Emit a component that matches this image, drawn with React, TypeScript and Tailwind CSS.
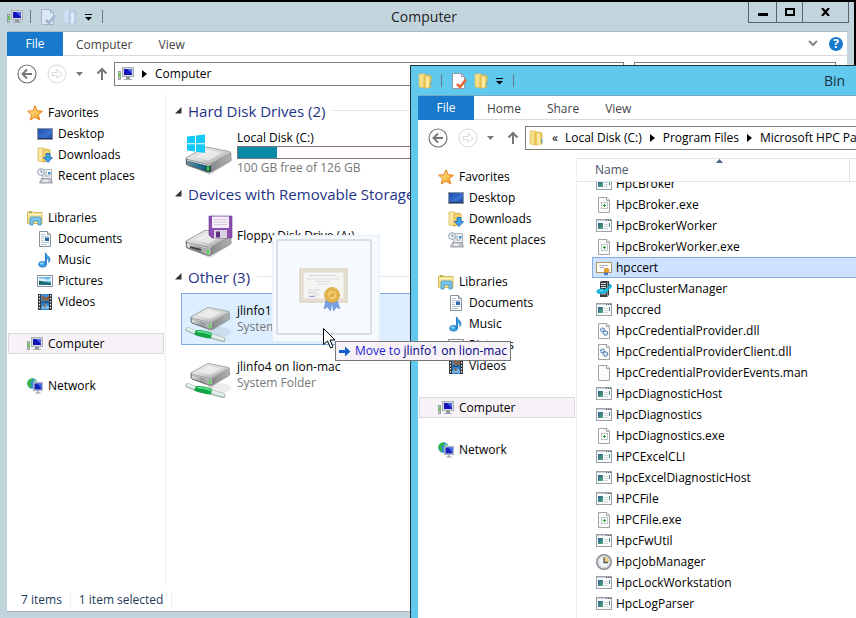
import React from "react";

type IconProps = { size?: number };

/* ---------- small icons ---------- */

const ComputerIcon = () => (
  <svg width="16" height="16" viewBox="0 0 16 16">
    <rect x="0.5" y="5.5" width="2" height="8" fill="#c9ccd0" stroke="#8b8f94" strokeWidth=".8" />
    <rect x="1" y="7" width="1.500" height="4" fill="#5fd23c" />
    <rect x="4.5" y="1.500" width="11" height="9" fill="#d6d9de" stroke="#a9adb4" />
    <rect x="6" y="3" width="8" height="6" fill="#1214b8" />
    <path d="M9 3h5v5z" fill="#4a63e8" />
    <rect x="8" y="11" width="4" height="2" fill="#8e9298" />
    <rect x="6" y="13" width="8" height="1" fill="#a9adb2" />
  </svg>
);

const FolderIcon = ({ size = 16 }: IconProps) => (
  <svg width={size} height={size} viewBox="0 0 16 16">
    <path d="M1 1h6l1 2v12l-7-1z" fill="#f7e08b" stroke="#e0bf52" strokeWidth=".7" />
    <path d="M6 3l4-1 3 1v11l-7 1z" fill="#f0cb58" stroke="#d5ab3a" strokeWidth=".7" />
    <path d="M8 3l3 1v10l-3 1.500z" fill="#fbe9a6" />
    <path d="M12 9h1.500v4H12z" fill="#5db4d8" />
  </svg>
);

const PaleFolderIcon = () => (
  <svg width="16" height="16" viewBox="0 0 16 16">
    <path d="M1 1h6l1 2v12l-7-1z" fill="#d3e0f2" stroke="#b8c9e2" strokeWidth=".7" />
    <path d="M6 3l4-1 3 1v11l-7 1z" fill="#bfd0e8" stroke="#a9bdd9" strokeWidth=".7" />
    <path d="M8 3l3 1v10l-3 1.500z" fill="#dfe9f7" />
  </svg>
);

const PropertiesIcon = ({ pale }: { pale?: boolean }) => (
  <svg width="16" height="16" viewBox="0 0 16 16">
    <path
      d="M.5.5h9l3 3v12h-12z"
      fill={pale ? "#dce7f5" : "#fdfdff"}
      stroke={pale ? "#9fb3cd" : "#8f99ab"}
    />
    <path d="M9.500.5v3h3" fill="none" stroke={pale ? "#9fb3cd" : "#8f99ab"} />
    <path d="M5 11l3 3 6-7.500" fill="none" stroke={pale ? "#a3b5d2" : "#e8683c"} strokeWidth="2.600" />
  </svg>
);

const StarIcon = () => (
  <svg width="16" height="16" viewBox="0 0 16 16">
    <defs>
      <linearGradient id="star" x1="0" y1="0" x2="1" y2="1">
        <stop offset="0" stopColor="#fff3a0" />
        <stop offset="1" stopColor="#f59a1c" />
      </linearGradient>
    </defs>
    <path
      d="M8 .8l2.100 4.900 5.300.5-4 3.500 1.300 5.200L8 12.200l-4.700 2.700 1.300-5.200-4-3.500 5.300-.5z"
      fill="url(#star)"
      stroke="#e87f18"
    />
  </svg>
);

const DesktopIcon = () => (
  <svg width="16" height="16" viewBox="0 0 16 16">
    <defs>
      <linearGradient id="desk" x1="0" y1="0" x2="1" y2="1">
        <stop offset="0" stopColor="#1d48a8" />
        <stop offset=".6" stopColor="#3b72cf" />
        <stop offset="1" stopColor="#1c3f96" />
      </linearGradient>
    </defs>
    <rect x=".5" y="2.500" width="15" height="11" fill="url(#desk)" stroke="#8d98a8" />
    <rect x="1" y="12" width="14" height="1" fill="#243354" />
  </svg>
);

const DownloadsIcon = () => (
  <svg width="16" height="16" viewBox="0 0 16 16">
    <path d="M1 1h6l1 2v12l-7-1z" fill="#f9e6a0" stroke="#dcb953" strokeWidth=".8" />
    <path d="M6 3l4-1 3 1v10l-7 2z" fill="#f1d270" stroke="#d5ab3a" strokeWidth=".8" />
    <path d="M9 6.500h4v4h2.500L11 15.500 6.500 10.500H9z" fill="#3d9fe8" stroke="#1c68b8" strokeWidth=".8" />
  </svg>
);

const RecentIcon = () => (
  <svg width="16" height="16" viewBox="0 0 16 16">
    <path d="M5.500 1.500h9v10h-9z" fill="#f4f6f8" stroke="#aab0b8" />
    <path d="M4.500 10.500h9.500l1.500 4.500h-13z" fill="#c3c7cc" stroke="#8d939b" strokeWidth=".8" />
    <path d="M8 4h2M7 6h3M7 8h6" stroke="#9aa5b5" />
    <rect x="11" y="4" width="2.500" height="2.500" fill="#3d8bd0" />
    <rect x="6" y="12" width="5" height="1.500" fill="#f9f9f9" />
    <circle cx="4" cy="4" r="3.400" fill="#eef3f8" stroke="#8f9aa8" strokeWidth=".9" />
    <path d="M4 2v2.200h1.600" fill="none" stroke="#4d6a90" strokeWidth=".8" />
  </svg>
);

const LibrariesIcon = () => (
  <svg width="16" height="16" viewBox="0 0 16 16">
    <path d="M.5 2.500l1-1h4l1 1h8.500v11H.5z" fill="#f6df8d" stroke="#d3b04c" strokeWidth=".9" />
    <path d="M1 4.500h14" stroke="#fff6cf" />
    <rect x="2" y="2" width="3" height="1" fill="#7aba56" />
    <path d="M3 15V8.500q0-1.500 1.500-1.500h8Q14 7 14 8.500V15h-3v-4H6v4z" fill="#7cc5ea" stroke="#3e94c8" strokeWidth=".8" />
  </svg>
);

const DocumentsIcon = () => (
  <svg width="16" height="16" viewBox="0 0 16 16">
    <path d="M2.500.5h8l3 3v12h-11z" fill="#fdfdfd" stroke="#8a9099" />
    <path d="M10.500.5v3h3" fill="#dfe3e8" stroke="#8a9099" />
    <path d="M4 3.500h4M4 5.500h8M4 7.500h3M4 9.500h3M4 11.500h8M4 13.500h6" stroke="#a9bdd3" strokeWidth=".9" />
    <rect x="8" y="6.500" width="4" height="3.500" fill="#2a64ad" />
  </svg>
);

const MusicIcon = () => (
  <svg width="16" height="16" viewBox="0 0 16 16">
    <path d="M8 .5c.8 3 4.500 3.200 5 6.500.2 1.600-.5 2.700-1.300 3.500.6-2.600-.8-3.600-2.200-4v6" fill="#3ba0e6" stroke="#1d6fb8" strokeWidth=".6" />
    <ellipse cx="5.600" cy="12.300" rx="4" ry="2.900" fill="#3ba0e6" stroke="#1d6fb8" strokeWidth=".7" />
    <path d="M8.700 1v11.500" stroke="#2682cc" strokeWidth="1.500" />
    <ellipse cx="4.800" cy="11.600" rx="1.700" ry="1" fill="#9fd7fa" />
  </svg>
);

const PicturesIcon = () => (
  <svg width="16" height="16" viewBox="0 0 16 16">
    <rect x=".5" y="2.500" width="15" height="11" fill="#fff" stroke="#8d939b" />
    <rect x="2" y="4" width="12" height="8" fill="#6cb8e6" />
    <path d="M2 6q3-1.500 6 0t6-1v3H2z" fill="#d8eefa" />
    <path d="M2 8l3 .5L14 10v2H2z" fill="#15707a" />
    <path d="M2 7.500l6 2.500H2z" fill="#1e5f4a" />
  </svg>
);

const VideosIcon = () => (
  <svg width="16" height="16" viewBox="0 0 16 16">
    <rect x="1" y="0" width="14" height="16" fill="#2e3338" />
    <rect x="4" y="0" width="8" height="7.500" fill="#3a8fd6" />
    <rect x="4" y="8.500" width="8" height="7.500" fill="#2f80c8" />
    <path d="M5 1l4 3 3-3v5L8 7 5 5z" fill="#92603f" />
    <path d="M4 14l4-4 4 2v3H4z" fill="#77b6e4" />
    <path d="M6 10l3 1-1 3z" fill="#8b5a3c" />
    <path d="M2.500 1v15M13.500 1v15" stroke="#e8ecef" strokeWidth="1.200" strokeDasharray="1.500 1.500" />
  </svg>
);

const NetworkIcon = () => (
  <svg width="16" height="16" viewBox="0 0 16 16">
    <circle cx="5.500" cy="5.500" r="5.200" fill="#2f8fe4" />
    <path d="M.5 4Q3-.5 7 .6L5.500 3 3 4.500l1.500 2L4 10Q.5 8.500.4 5z" fill="#32b83c" />
    <path d="M7.500 1.500L10.500 4H7z" fill="#9af07c" />
    <rect x="6.500" y="4.500" width="9" height="8" fill="#d2d6dd" stroke="#aab1bf" />
    <rect x="7.500" y="5.500" width="7" height="6" fill="#1420b8" />
    <path d="M10 5.500h4.500v5z" fill="#4768e8" />
    <path d="M11 13v1.500M8.500 15h5" stroke="#8b93a3" strokeWidth="1.200" />
  </svg>
);

/* ---------- file icons ---------- */

const AppFileIcon = () => (
  <svg width="16" height="16" viewBox="0 0 16 16">
    <defs>
      <linearGradient id="app" x1="0" y1="0" x2="1" y2="1">
        <stop offset="0" stopColor="#2f5f96" />
        <stop offset="1" stopColor="#4fae74" />
      </linearGradient>
    </defs>
    <rect x=".5" y="1.500" width="15" height="12" fill="#fbfcfd" stroke="#9aa1a8" />
    <rect x="1" y="2" width="14" height="1" fill="#c8ced5" />
    <path d="M10 2.500h1M12 2.500h1M14 2.500h1" stroke="#4c5560" />
    <rect x="2" y="5" width="5" height="6" fill="url(#app)" />
    <path d="M8 6.500h4M8 8.500h4M8 10.500h4" stroke="#ccd2d8" strokeWidth=".9" />
    <rect x="13" y="5" width="1" height="4" fill="#3b8c80" />
  </svg>
);

const Sheet = ({ children }: { children?: React.ReactNode }) => (
  <svg width="16" height="16" viewBox="0 0 16 16">
    <path d="M2.500.5h8.500l2.500 2.500v12.500h-11z" fill="#fcfcfc" stroke="#a3a3a3" />
    <path d="M10.500.5v3h3" fill="#ececec" stroke="#a3a3a3" />
    {children}
  </svg>
);

const ConfigFileIcon = () => (
  <Sheet>
    <rect x="5.500" y="5.500" width="6" height="6" fill="#fff" stroke="#b4b9be" strokeWidth=".8" />
    <path d="M8.500 7v3M7 8.500h3" stroke="#22a13c" strokeWidth="1.200" />
  </Sheet>
);

const DllIcon = () => (
  <Sheet>
    <circle cx="6.500" cy="7" r="1.900" fill="#d6e6f5" stroke="#3d6f9e" strokeWidth="1.200" strokeDasharray="1.200 .6" />
    <circle cx="9.500" cy="10" r="2.200" fill="#d6e6f5" stroke="#3d6f9e" strokeWidth="1.300" strokeDasharray="1.200 .6" />
  </Sheet>
);

const BlankIcon = () => <Sheet />;

const CertIcon = () => (
  <svg width="16" height="16" viewBox="0 0 16 16">
    <rect x=".5" y="2.500" width="15" height="10" fill="#fffdf8" stroke="#b39565" />
    <path d="M3 5.500h9M4 7.500h4" stroke="#9fa6c6" strokeWidth=".9" />
    <path d="M8.500 11.500L8 15.500l2-1 2 1-.5-4z" fill="#2f63d6" />
    <circle cx="10.500" cy="10.500" r="2.300" fill="#e8a51a" stroke="#b87a10" strokeWidth=".6" />
  </svg>
);

const ClusterIcon = () => (
  <svg width="16" height="16" viewBox="0 0 16 16">
    <path d="M4 1l2-1h7v14l-2 2H4z" fill="#34393d" />
    <path d="M5 2.500h5M5 4.500h5M5 6.500h5M5 13h5" stroke="#d9dde0" />
    <path d="M11.500 1v14" stroke="#8b9298" />
    <path d="M1 12Q-1 9 3 8q3-1 5 .5L12 6q2-1.500.5-3.500 4 .5 3.300 3.500Q15 8 12 9q-1 3.500-5 3.500-4 1-6-.5z" fill="#1cb6de" />
    <path d="M4 9.500q2-.5 3.500.5" stroke="#8be2f4" fill="none" />
  </svg>
);

const ClockIcon = () => (
  <svg width="16" height="16" viewBox="0 0 16 16">
    <circle cx="8" cy="8" r="7.200" fill="#f2f4f7" stroke="#8b8f95" strokeWidth="1.600" />
    <path d="M8 8V2.500A5.500 5.500 0 0 1 13.500 8z" fill="#f4c873" />
    <circle cx="8" cy="8" r="5.500" fill="none" stroke="#c7ccd2" strokeWidth=".8" />
    <path d="M8 3.500V8.500h4" fill="none" stroke="#4c5764" strokeWidth="1.300" />
  </svg>
);

/* ---------- drive icons ---------- */

const DriveGradients = () => (
  <defs>
    <linearGradient id="lid" x1="0" y1="0" x2="1" y2="1">
      <stop offset="0" stopColor="#f4f4f4" />
      <stop offset=".55" stopColor="#d4d5d5" />
      <stop offset="1" stopColor="#8f9192" />
    </linearGradient>
    <linearGradient id="front">
      <stop offset="0" stopColor="#e6e7e7" />
      <stop offset=".5" stopColor="#9a9c9d" />
      <stop offset="1" stopColor="#c4c6c7" />
    </linearGradient>
    <linearGradient id="side" x1="0" y1="0" x2="1" y2="0">
      <stop offset="0" stopColor="#55585a" />
      <stop offset="1" stopColor="#b0b2b3" />
    </linearGradient>
    <linearGradient id="sys">
      <stop offset="0" stopColor="#6f8c96" />
      <stop offset=".55" stopColor="#1b6d94" />
      <stop offset="1" stopColor="#1d4a48" />
    </linearGradient>
  </defs>
);

const DriveBody = ({ front = "url(#front)" }: { front?: string }) => (
  <g>
    <DriveGradients />
    <path d="M6 38l19 8 22-14v-3z" fill="#000" opacity=".14" />
    <path d="M1 29L19 19q2-1 4-.6l21 4.100q2 .6 2 2v6q0 1-1.500 2L27 42.500q-2.500 1.400-5 .6L3 36.500q-2-.8-2-2.500z" fill="url(#side)" stroke="#6d7072" strokeWidth=".5" />
    <path d="M1 29L19 19q2-1 4-.6l21 4.100q2.500.8 0 2.200L27 34.500q-2.500 1.400-5 .6L3 30.500q-2-.6-2-1.500z" fill="url(#lid)" stroke="#8d9092" strokeWidth=".5" />
    <path d="M10 28l12.500-7 14 3L24 31.500z" fill="#fff" opacity=".45" />
    <path d="M1.500 31l20 5.300q2.500.6 4.500-.3v6.500q-2 .9-4 .3L3 36q-1.500-.6-1.500-2z" fill={front} stroke="#5f6264" strokeWidth=".7" />
    <path d="M2 31l19.500 5q2.500.6 4.500-.3" fill="none" stroke="#f8f8f8" strokeWidth=".8" />
    <rect x="22" y="37.500" width="2" height="4" fill="#37e02c" />
  </g>
);

const SystemDriveIcon = () => (
  <svg width="48" height="48" viewBox="0 0 48 48">
    <DriveBody front="url(#sys)" />
    <path d="M2 7.500l8-.8v7.500H2zM11 6.500l9-1V14.200h-9zM2 15.200h8v7.300L2 21.500zM11 15.200h9V24l-9-1.300z" fill="#14c8fa" />
  </svg>
);

const FloppyDriveIcon = () => (
  <svg width="48" height="48" viewBox="0 0 48 48">
    <DriveBody />
    <path d="M5 34l11 3v2L5 36z" fill="#3c3f40" />
    <path d="M24 4h23v22H27l-3-3z" fill="#8a4fb0" stroke="#6f3796" strokeWidth=".6" />
    <rect x="27" y="4.500" width="17" height="11.500" fill="#f3eef7" />
    <path d="M29 7.500h13M29 10h13M29 12.500h13" stroke="#cfc3da" strokeWidth=".8" />
    <rect x="29" y="18" width="13" height="8" fill="#d9d3e0" />
    <rect x="31" y="19.500" width="4" height="6" fill="#613184" />
  </svg>
);

const NetworkDriveIcon = () => (
  <svg width="48" height="48" viewBox="0 0 48 48">
    <ellipse cx="34" cy="37" rx="12" ry="5" fill="#000" opacity=".07" />
    <g transform="translate(5 -3) scale(.86)">
      <DriveBody />
    </g>
    <path d="M26 37v-2" stroke="#d0d5d4" strokeWidth="4" />
    <path d="M3 34.500l9 3.500M26 41l12 3.500" stroke="#a3b8ae" strokeWidth="5" strokeLinecap="round" />
    <path d="M3 34l9 3.500M26 40.500l12 3.500" stroke="#e3efea" strokeWidth="3" strokeLinecap="round" />
    <path d="M11 35q7-.5 16 3l-1 5.500q-8-.3-17-4z" fill="#12a447" />
    <path d="M12 36.500q7 0 14 2.700" stroke="#5fe890" strokeWidth="1.500" fill="none" />
  </svg>
);

const BigCertificate = () => (
  <svg width="50" height="44" viewBox="0 0 50 44" className="opacity-85">
    <rect x="1" y="1" width="47" height="33" fill="#e8e0d0" stroke="#cbc0a8" />
    <rect x="4" y="4" width="41" height="27" fill="#f6f5f0" stroke="#d3cbb8" strokeWidth=".7" />
    <path d="M11 7.500h26" stroke="#b5c4de" strokeWidth="1.200" strokeDasharray="2 .5" />
    <path d="M8 11h32M17 13.500h15M19 16h11" stroke="#ccd3df" strokeDasharray="3 .6" />
    <path d="M9 22h13M9 24.500h9M10 27h10" stroke="#c0c6d0" strokeDasharray="2 .6" />
    <path d="M10 28.500h6" stroke="#7f9dcd" />
    <path d="M27 32l-2 9 3.500-2 3 4 1.500-9zM38 32l3 9-3.500-2-3 4-1.500-9z" fill="#6191df" stroke="#3f6fc4" strokeWidth=".5" />
    <circle cx="33" cy="27" r="7.500" fill="#e5ab2b" stroke="#c78d1d" strokeDasharray="2 1" />
    <circle cx="33" cy="27" r="5" fill="#f2c654" stroke="#c9901f" strokeWidth=".7" />
    <path d="M29.500 29q2-5 6.500-4-1 5-6.500 4z" fill="#dba02a" />
  </svg>
);

/* ---------- shared window parts ---------- */

const Divider = ({ className = "" }: { className?: string }) => (
  <span className={`h-[13px] w-px bg-[#6b7880] ${className}`} />
);

function QuickAccess({ icon, pale }: { icon: React.ReactNode; pale?: boolean }) {
  return (
    <div className="flex items-center">
      <span className="w-4">{icon}</span>
      <Divider className="ml-[7px]" />
      <button aria-label="Properties" className="ml-[10px]">
        <PropertiesIcon pale={pale} />
      </button>
      <button aria-label="New folder" className="ml-[6px]">
        {pale ? <PaleFolderIcon /> : <FolderIcon />}
      </button>
      <button aria-label="Customize toolbar" className="ml-[5px]">
        <svg width="9" height="8" viewBox="0 0 9 8">
          <path d="M1 1.500h7" stroke="#000" />
          <path d="M1 4h7L4.500 7.500z" />
        </svg>
      </button>
      <Divider className="ml-[9px]" />
    </div>
  );
}

function RibbonTabs({ tabs, children }: { tabs: string[]; children?: React.ReactNode }) {
  return (
    <div className="flex h-6 items-stretch border-b border-[#d9dadb]">
      <button className="-mb-px w-14 bg-[#1979ca] text-white">File</button>
      {tabs.map((tab) => (
        <button key={tab} className="px-[13px] pt-[2px] text-[#444]">
          {tab}
        </button>
      ))}
      {children}
    </div>
  );
}

const Chevron = () => (
  <svg width="5" height="8" viewBox="0 0 5 8" className="shrink-0">
    <path d="M0 0l5 4-5 4z" />
  </svg>
);

function NavigationBar({ children, search }: { children: React.ReactNode; search?: boolean }) {
  return (
    <div className="flex h-[38px] items-start pt-[6px] pr-[11px] pl-[10px]">
      <div className="flex h-6 shrink-0 items-center">
        <button aria-label="Back">
          <svg width="20" height="20" viewBox="0 0 20 20" fill="none" stroke="#777">
            <circle cx="10" cy="10" r="9" strokeWidth="1.200" />
            <path d="M15 10H6M10 5.500L5.500 10l4.500 4.500" strokeWidth="2" />
          </svg>
        </button>
        <button aria-label="Forward" className="ml-[10px]">
          <svg width="20" height="20" viewBox="0 0 20 20" fill="none" stroke="#d9d9d9">
            <circle cx="10" cy="10" r="9" />
            <path d="M5 8.500h5V5.500l5 4.500-5 4.500v-3H5z" />
          </svg>
        </button>
        <button aria-label="Recent locations" className="ml-[8px]">
          <svg width="9" height="6" viewBox="0 0 9 6">
            <path d="M1 1h7L4.500 5z" fill="#777" />
          </svg>
        </button>
        <button aria-label="Up" className="ml-[12px]">
          <svg width="12" height="14" viewBox="0 0 12 14" fill="none" stroke="#777" strokeWidth="2">
            <path d="M6 13V2M1.500 6.500L6 2l4.500 4.500" />
          </svg>
        </button>
      </div>
      <div className="ml-[6px] flex h-6 flex-1 items-center overflow-hidden border border-[#7d7d7d] pl-[3px] whitespace-nowrap">
        {children}
      </div>
      {search && (
        <input aria-label="Search Computer" className="ml-[10px] h-6 w-[202px] border border-[#7d7d7d] bg-white px-2" />
      )}
    </div>
  );
}

type NavEntry = { label: string; icon: () => React.ReactElement; nested?: boolean };

const navGroups: NavEntry[][] = [
  [
    { label: "Favorites", icon: StarIcon },
    { label: "Desktop", icon: DesktopIcon, nested: true },
    { label: "Downloads", icon: DownloadsIcon, nested: true },
    { label: "Recent places", icon: RecentIcon, nested: true },
  ],
  [
    { label: "Libraries", icon: LibrariesIcon },
    { label: "Documents", icon: DocumentsIcon, nested: true },
    { label: "Music", icon: MusicIcon, nested: true },
    { label: "Pictures", icon: PicturesIcon, nested: true },
    { label: "Videos", icon: VideosIcon, nested: true },
  ],
  [{ label: "Computer", icon: ComputerIcon }],
  [{ label: "Network", icon: NetworkIcon }],
];

function NavigationPane() {
  return (
    <nav className="flex w-[159px] shrink-0 flex-col gap-[21px] border-r border-[#f0f0f0] pt-2 pr-px pl-px">
      {navGroups.map((group) => (
        <ul key={group[0].label}>
          {group.map(({ label, icon: Icon, nested }) => (
            <li key={label}>
              <button
                className={`flex h-[21px] w-full items-center gap-[5px] border ${nested ? "pl-7" : "pl-[18px]"} ${
                  label === "Computer" ? "border-[#dadada] bg-[#f7f2f7]" : "border-transparent"
                }`}
              >
                <Icon />
                {label}
              </button>
            </li>
          ))}
        </ul>
      ))}
    </nav>
  );
}

/* ---------- "Computer" window ---------- */

function Group({ title, children }: { title: string; children: React.ReactNode }) {
  return (
    <section>
      <h2 className="flex h-[31px] items-center pb-[2px] text-[15px] whitespace-nowrap text-[#1e3287]">
        <svg width="7" height="7" viewBox="0 0 7 7" className="mr-[6px] shrink-0">
          <path d="M6.500 0v6.500H0z" fill="#333" />
        </svg>
        {title}
        <span className="ml-[7px] h-px flex-1 bg-[#dfeaf3]" />
      </h2>
      <ul className="flex flex-col gap-1 pl-[6px]">{children}</ul>
    </section>
  );
}

function Drive({
  icon,
  name,
  detail,
  used,
  selected,
}: {
  icon: React.ReactNode;
  name: string;
  detail?: string;
  used?: number;
  selected?: boolean;
}) {
  return (
    <li>
      <button
        className={`flex h-[52px] w-[256px] items-center gap-1 border pl-[3px] text-left ${
          selected ? "border-[#7da9d8] bg-[#dceeff]" : "border-transparent"
        }`}
      >
        {icon}
        <span className="flex flex-1 flex-col leading-4">
          <span>{name}</span>
          {used !== undefined && (
            <span className="mb-px h-[13px] border border-[#777] bg-[#fffbff]">
              <span className="block h-full bg-[#0b8aa5]" style={{ width: `${used}%` }} />
            </span>
          )}
          {detail && <span className="text-[#777]">{detail}</span>}
        </span>
      </button>
    </li>
  );
}

function ComputerWindow() {
  return (
    <section className="absolute top-[2px] right-[2px] bottom-0 left-0 flex flex-col bg-[#c3d5dc] pr-[7px] pb-[6px] pl-[7px]">
      <header className="-mr-[2px] grid h-[29px] grid-cols-[1fr_auto_1fr] items-center">
        <QuickAccess icon={<ComputerIcon />} pale />
        <h1 className="pr-2 text-[14px] text-[#222]">Computer</h1>
        <div className="flex h-[21px] self-start justify-self-end border border-t-0 border-[#58646a]">
          <button aria-label="Minimize" className="flex w-[27px] items-center justify-center">
            <svg width="10" height="10">
              <rect y="6" width="10" height="3" />
            </svg>
          </button>
          <button aria-label="Maximize" className="flex w-[27px] items-center justify-center border-x border-[#58646a]">
            <svg width="10" height="8" fill="none" stroke="#000" strokeWidth="2">
              <rect x="1" y="1" width="8" height="6" />
            </svg>
          </button>
          <button aria-label="Close" className="flex w-[45px] items-center justify-center">
            <svg width="10" height="8" fill="none" stroke="#000" strokeWidth="2.200">
              <path d="M1 0l7 8M8 0L1 8" />
            </svg>
          </button>
        </div>
      </header>
      <div className="flex min-h-0 flex-1 flex-col border-y border-t-[#a9bcc8] border-b-[#a3b3ba] bg-white">
        <RibbonTabs tabs={["Computer", "View"]}>
          <div className="ml-auto flex items-center gap-[11px] pr-1">
            <button aria-label="Expand ribbon">
              <svg width="10" height="7" fill="none" stroke="#888" strokeWidth="2">
                <path d="M1 1l4 4 4-4" />
              </svg>
            </button>
            <button
              aria-label="Help"
              className="size-[14px] rounded-full bg-[#1979ca] text-[12px] leading-[14px] font-bold text-white"
            >
              ?
            </button>
          </div>
        </RibbonTabs>
        <NavigationBar search>
          <ComputerIcon />
          <span className="mx-[8px]">
            <Chevron />
          </span>
          Computer
        </NavigationBar>
        <div className="flex min-h-0 flex-1">
          <NavigationPane />
          <main className="min-w-0 flex-1 overflow-hidden pt-[2px] pl-[9px]">
            <Group title="Hard Disk Drives (2)">
              <Drive icon={<SystemDriveIcon />} name="Local Disk (C:)" used={20} detail="100 GB free of 126 GB" />
            </Group>
            <Group title="Devices with Removable Storage (1)">
              <Drive icon={<FloppyDriveIcon />} name="Floppy Disk Drive (A:)" />
            </Group>
            <Group title="Other (3)">
              <Drive icon={<NetworkDriveIcon />} name="jlinfo1 on lion-mac" detail="System Folder" selected />
              <Drive icon={<NetworkDriveIcon />} name="jlinfo4 on lion-mac" detail="System Folder" />
            </Group>
          </main>
        </div>
        <footer className="flex h-6 items-center pt-[2px] pl-[14px] text-[#1e395b]">
          <span className="border-r border-[#eee] pr-2">7 items</span>
          <span className="border-r border-[#eee] px-2">1 item selected</span>
        </footer>
      </div>
    </section>
  );
}

/* ---------- "Bin" window ---------- */

const files: { name: string; icon: () => React.ReactElement }[] = [
  { name: "HpcBroker", icon: AppFileIcon },
  { name: "HpcBroker.exe", icon: ConfigFileIcon },
  { name: "HpcBrokerWorker", icon: AppFileIcon },
  { name: "HpcBrokerWorker.exe", icon: ConfigFileIcon },
  { name: "hpccert", icon: CertIcon },
  { name: "HpcClusterManager", icon: ClusterIcon },
  { name: "hpccred", icon: AppFileIcon },
  { name: "HpcCredentialProvider.dll", icon: DllIcon },
  { name: "HpcCredentialProviderClient.dll", icon: DllIcon },
  { name: "HpcCredentialProviderEvents.man", icon: BlankIcon },
  { name: "HpcDiagnosticHost", icon: AppFileIcon },
  { name: "HpcDiagnostics", icon: AppFileIcon },
  { name: "HpcDiagnostics.exe", icon: ConfigFileIcon },
  { name: "HPCExcelCLI", icon: AppFileIcon },
  { name: "HpcExcelDiagnosticHost", icon: AppFileIcon },
  { name: "HPCFile", icon: AppFileIcon },
  { name: "HPCFile.exe", icon: ConfigFileIcon },
  { name: "HpcFwUtil", icon: AppFileIcon },
  { name: "HpcJobManager", icon: ClockIcon },
  { name: "HpcLockWorkstation", icon: AppFileIcon },
  { name: "HpcLogParser", icon: AppFileIcon },
];

function BinWindow() {
  return (
    <section className="absolute top-[65px] bottom-0 left-[410px] flex w-[848px] flex-col border-t border-l border-[#20343d] bg-[#62c9ee] px-[7px]">
      <header className="grid h-[29px] grid-cols-[1fr_auto_1fr] items-center">
        <QuickAccess icon={<FolderIcon />} />
        <h1 className="text-[14px] text-[#12303c]">Bin</h1>
      </header>
      <div className="flex min-h-0 flex-1 flex-col border-t border-[#6fa9c6] bg-white">
        <RibbonTabs tabs={["Home", "Share", "View"]} />
        <NavigationBar>
          <FolderIcon />
          <span className="mx-[7px]">«</span>
          Local Disk (C:)
          <span className="mx-[8px]">
            <Chevron />
          </span>
          Program Files
          <span className="mx-[8px]">
            <Chevron />
          </span>
          Microsoft HPC Pack
        </NavigationBar>
        <div className="flex min-h-0 flex-1">
          <NavigationPane />
          <main className="flex min-w-0 flex-1 flex-col">
            <div className="flex h-6 shrink-0 border-y border-[#e3e4e6]">
              <button className="relative w-[273px] border-r border-[#dfe1e4] pl-[18px] text-left text-[#44546a]">
                Name
                <svg width="7" height="4" viewBox="0 0 7 4" className="absolute top-0 left-[139px]">
                  <path d="M3.500 0L7 4H0z" fill="#4b6484" />
                </svg>
              </button>
            </div>
            <div className="min-h-0 flex-1 overflow-hidden pl-[15px]">
              {/* the list is scrolled part of a row down */}
              <ul className="-mt-[9px]">
                {[...files, { name: "", icon: AppFileIcon }].map(({ name, icon: Icon }) => (
                  <li key={name}>
                    <button
                      aria-label={name || "More files"}
                      className={`flex h-[21px] w-full items-center gap-1 border pl-[3px] ${
                        name === "hpccert" ? "border-[#84acdd] bg-[#cde2ff]" : "border-transparent"
                      }`}
                    >
                      <Icon />
                      {name}
                    </button>
                  </li>
                ))}
              </ul>
            </div>
          </main>
        </div>
      </div>
    </section>
  );
}

/* ---------- drag feedback ---------- */

function DragFeedback() {
  return (
    <>
      <div className="absolute top-[235px] left-[272px] border border-[#e2eff9] bg-[#f6faff] pt-[3px] pr-[7px] pb-[6px] pl-[3px]">
        <div className="flex size-24 items-center justify-center rounded-[2px] border-2 border-[#d8dfe5] pt-[6px]">
          <BigCertificate />
        </div>
      </div>
      <div
        role="tooltip"
        className="absolute top-[341px] left-[335px] flex h-5 items-center gap-1 border border-[#767676] bg-[#f7f2f7] px-[3px] whitespace-nowrap text-[#00007f]"
      >
        <svg width="12" height="11" viewBox="0 0 12 11">
          <path d="M0 4h6V.5L11.500 5.500 6 10.500V7H0z" fill="#1560c8" />
        </svg>
        <span>
          <span className="text-[#1c1cd2]">Move to</span> jlinfo1 on lion-mac
        </span>
      </div>
      <svg width="14" height="22" viewBox="0 0 14 22" className="absolute top-[328px] left-[323px]">
        <path d="M.5.5v16l4-3.500 3 7 2.500-1-3-7H12z" fill="#fff" stroke="#000" />
      </svg>
    </>
  );
}

export default function App() {
  return (
    <div className="relative h-screen overflow-hidden bg-black font-['Open_Sans','Noto_Sans',sans-serif] text-[12px] leading-4 text-black">
      <ComputerWindow />
      <BinWindow />
      <DragFeedback />
    </div>
  );
}
